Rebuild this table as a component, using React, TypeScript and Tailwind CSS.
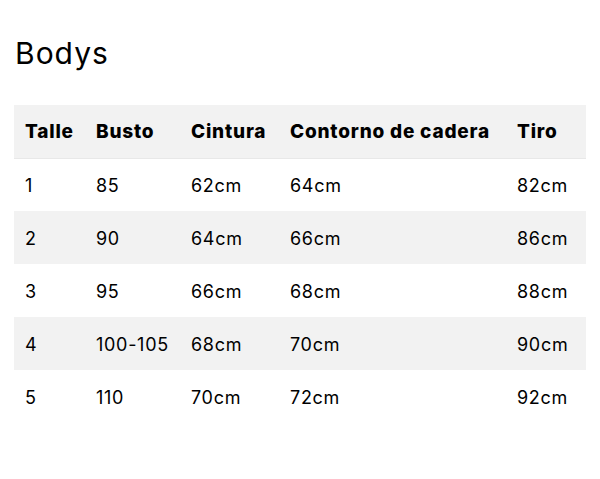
import React from "react";

const rows = [
  ["1", "85", "62cm", "64cm", "82cm"],
  ["2", "90", "64cm", "66cm", "86cm"],
  ["3", "95", "66cm", "68cm", "88cm"],
  ["4", "100-105", "68cm", "70cm", "90cm"],
  ["5", "110", "70cm", "72cm", "92cm"],
];

export default function App() {
  return (
    <div className="w-[600px] h-[479px] bg-white px-[14px] pt-[33px] text-black" style={{ fontFamily: "Inter, 'Open Sans', sans-serif" }}>
      <h1 className="text-[30px] font-normal leading-[40px] pl-[1px] tracking-[1px]">Bodys</h1>
      <table className="mt-[32px] w-[572px] table-fixed border-collapse text-[18px]">
        <colgroup>
          <col className="w-[71px]" />
          <col className="w-[95px]" />
          <col className="w-[99px]" />
          <col className="w-[227px]" />
          <col className="w-[80px]" />
        </colgroup>
        <thead>
          <tr className="h-[53px] bg-[#f2f2f2] border-b border-[#e8e8e8]">
            {["Talle", "Busto", "Cintura", "Contorno de cadera", "Tiro"].map((h) => (
              <th key={h} className="px-[11px] pt-[2px] text-left text-[19px] font-extrabold tracking-[0.8px] whitespace-nowrap">{h}</th>
            ))}
          </tr>
        </thead>
        <tbody>
          {rows.map((r, i) => (
            <tr key={i} className={`h-[53px] ${i % 2 === 1 ? "bg-[#f2f2f2]" : "bg-white"}`}>
              {r.map((c, j) => (
                <td key={j} className="px-[11px] pt-[2px] text-left tracking-[0.7px] whitespace-nowrap">{c}</td>
              ))}
            </tr>
          ))}
        </tbody>
      </table>
    </div>
  );
}
